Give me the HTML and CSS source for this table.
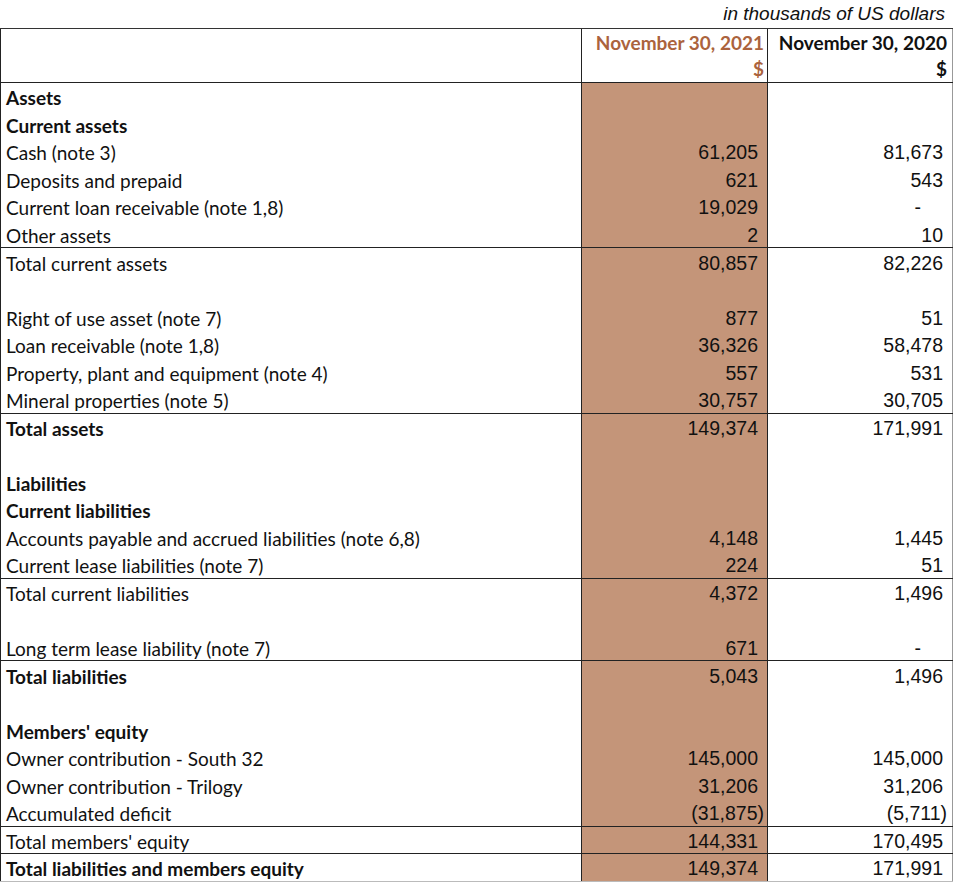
FILE: index.html
```html
<!DOCTYPE html>
<html>
<head>
<meta charset="utf-8">
<link rel="stylesheet" href="styles.css">
</head>
<body>
<div class="caption">in thousands of US dollars</div>
<div class="sheet">
  <div class="row head top"><div class="c1"></div><div class="c2 hd">November 30, 2021</div><div class="c3 hd">November 30, 2020</div></div>
  <div class="row head bb"><div class="c1"></div><div class="c2 hd">$</div><div class="c3 hd">$</div></div>

  <div class="row"><div class="c1 b">Assets</div><div class="c2"></div><div class="c3"></div></div>
  <div class="row"><div class="c1 b">Current assets</div><div class="c2"></div><div class="c3"></div></div>
  <div class="row"><div class="c1">Cash (note 3)</div><div class="c2">61,205</div><div class="c3">81,673</div></div>
  <div class="row"><div class="c1">Deposits and prepaid</div><div class="c2">621</div><div class="c3">543</div></div>
  <div class="row"><div class="c1">Current loan receivable (note 1,8)</div><div class="c2">19,029</div><div class="c3 dash">-</div></div>
  <div class="row bb"><div class="c1">Other assets</div><div class="c2">2</div><div class="c3">10</div></div>
  <div class="row"><div class="c1">Total current assets</div><div class="c2">80,857</div><div class="c3">82,226</div></div>
  <div class="row"><div class="c1"></div><div class="c2"></div><div class="c3"></div></div>
  <div class="row"><div class="c1">Right of use asset (note 7)</div><div class="c2">877</div><div class="c3">51</div></div>
  <div class="row"><div class="c1">Loan receivable (note 1,8)</div><div class="c2">36,326</div><div class="c3">58,478</div></div>
  <div class="row"><div class="c1">Property, plant and equipment (note 4)</div><div class="c2">557</div><div class="c3">531</div></div>
  <div class="row bb"><div class="c1">Mineral properties (note 5)</div><div class="c2">30,757</div><div class="c3">30,705</div></div>
  <div class="row"><div class="c1 b">Total assets</div><div class="c2">149,374</div><div class="c3">171,991</div></div>
  <div class="row"><div class="c1"></div><div class="c2"></div><div class="c3"></div></div>
  <div class="row"><div class="c1 b">Liabilities</div><div class="c2"></div><div class="c3"></div></div>
  <div class="row"><div class="c1 b">Current liabilities</div><div class="c2"></div><div class="c3"></div></div>
  <div class="row"><div class="c1">Accounts payable and accrued liabilities (note 6,8)</div><div class="c2">4,148</div><div class="c3">1,445</div></div>
  <div class="row bb"><div class="c1">Current lease liabilities (note 7)</div><div class="c2">224</div><div class="c3">51</div></div>
  <div class="row"><div class="c1">Total current liabilities</div><div class="c2">4,372</div><div class="c3">1,496</div></div>
  <div class="row"><div class="c1"></div><div class="c2"></div><div class="c3"></div></div>
  <div class="row bb"><div class="c1">Long term lease liability (note 7)</div><div class="c2">671</div><div class="c3 dash">-</div></div>
  <div class="row"><div class="c1 b">Total liabilities</div><div class="c2">5,043</div><div class="c3">1,496</div></div>
  <div class="row"><div class="c1"></div><div class="c2"></div><div class="c3"></div></div>
  <div class="row"><div class="c1 b">Members' equity</div><div class="c2"></div><div class="c3"></div></div>
  <div class="row"><div class="c1">Owner contribution - South 32</div><div class="c2">145,000</div><div class="c3">145,000</div></div>
  <div class="row"><div class="c1">Owner contribution - Trilogy</div><div class="c2">31,206</div><div class="c3">31,206</div></div>
  <div class="row bb"><div class="c1">Accumulated deficit</div><div class="c2 neg">(31,875)</div><div class="c3 neg">(5,711)</div></div>
  <div class="row bb"><div class="c1">Total members' equity</div><div class="c2">144,331</div><div class="c3">170,495</div></div>
  <div class="row last"><div class="c1 b">Total liabilities and members equity</div><div class="c2">149,374</div><div class="c3">171,991</div></div>
</div>
</body>
</html>
```
FILE: styles.css
```css
html, body {
  margin: 0;
  padding: 0;
  background: #ffffff;
}

body {
  width: 954px;
  height: 884px;
  overflow: hidden;
}

.caption {
  height: 28px;
  box-sizing: border-box;
  width: 953px;
  text-align: right;
  padding-right: 8px;
  font-family: "Liberation Sans", Arial, sans-serif;
  font-style: italic;
  font-size: 19px;
  line-height: 28px;
  color: #111;
}

.sheet {
  width: 953px;
  display: flex;
  flex-direction: column;
}

.row {
  display: grid;
  grid-template-columns: 581px 187px 185px;
  height: 27.55px;
  box-sizing: border-box;
}

.row.head {
  height: 27.5px;
}

.row.top {
  border-top: 1px solid #333;
}

.row.bb {
  border-bottom: 1px solid #222;
}

.row.last {
  border-bottom: 1px solid #bbb;
}

.c1, .c2, .c3 {
  display: flex;
  align-items: center;
  box-sizing: border-box;
  min-width: 0;
  white-space: nowrap;
  padding-top: 2px;
}

.c1 {
  border-left: 1px solid #222;
  padding-left: 5px;
  font-family: Lato, "Liberation Sans", sans-serif;
  font-size: 19px;
  color: #111;
}

.c1.b {
  font-weight: bold;
}

.c2, .c3 {
  justify-content: flex-end;
  font-family: "Liberation Sans", Arial, sans-serif;
  font-size: 19.5px;
  color: #111;
  padding-right: 9px;
}

.c2 {
  border-left: 1px solid #222;
  border-right: 1px solid #222;
  background: #c49579;
}

.c3 {
  border-right: 1px solid #999;
}

.c2.neg {
  padding-right: 3px;
}

.c3.neg {
  padding-right: 5px;
}

.c3.dash {
  padding-right: 31px;
}

.head .c1, .head .c2, .head .c3 {
  padding-top: 0;
}

.head .c2, .head .c3 {
  background: #ffffff;
}

.hd {
  font-family: Lato, "Liberation Sans", sans-serif;
  font-weight: bold;
  font-size: 19px;
}

.c2.hd {
  color: #ab633d;
  padding-right: 3px;
}

.c3.hd {
  color: #111;
  padding-right: 5px;
}
```
